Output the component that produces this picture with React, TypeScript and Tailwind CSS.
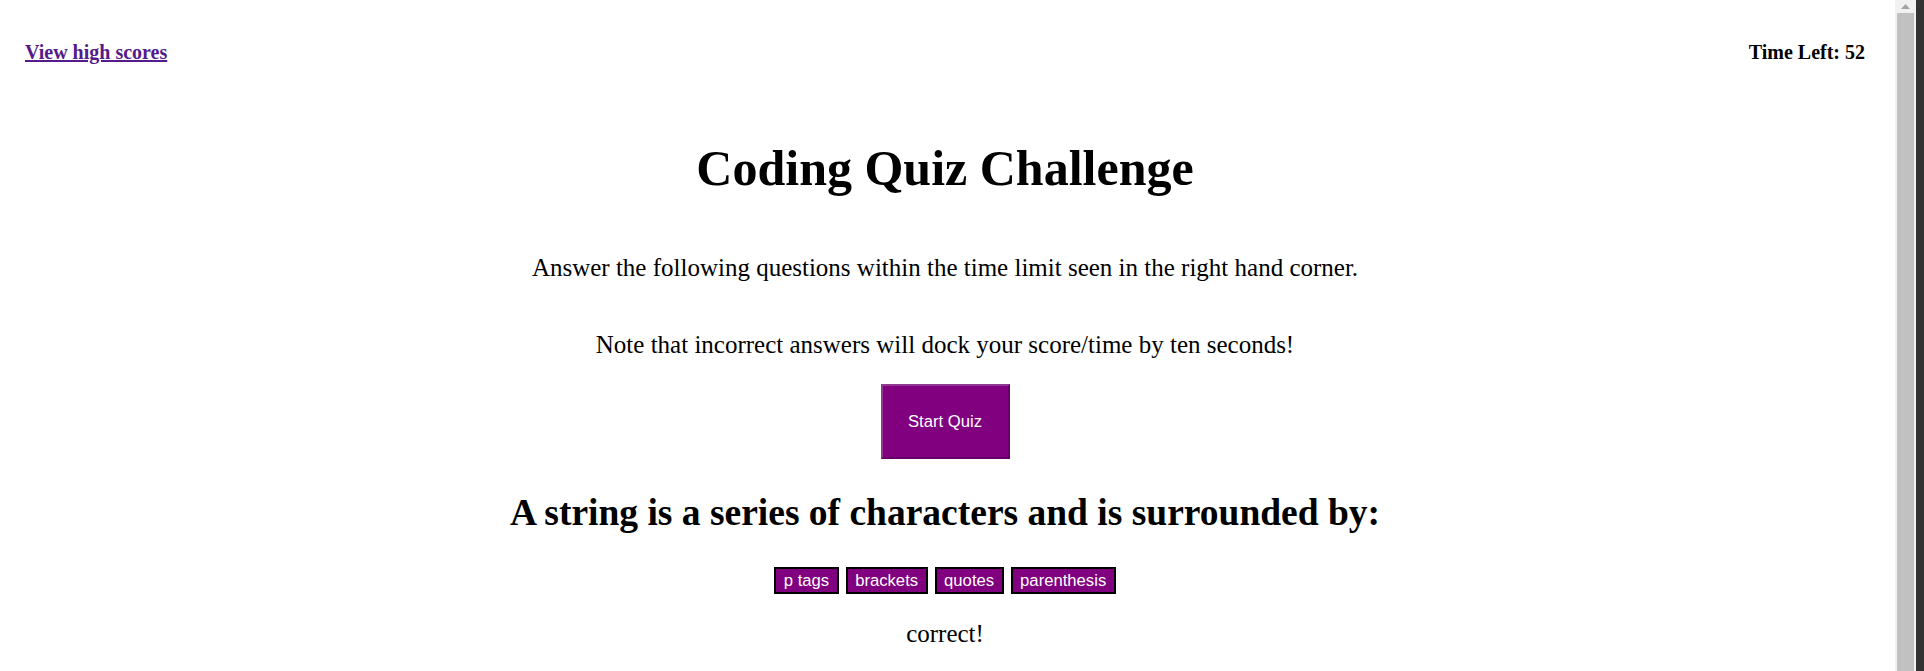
import React from 'react';

const answers = ['p tags', 'brackets', 'quotes', 'parenthesis'];

export default function App() {
  return (
    <div className="flex h-[671px] w-full overflow-hidden bg-white text-black">
      <div className="flex-1 min-w-0 font-['Liberation_Serif','Times_New_Roman',serif]">
        {/* header */}
        <div className="flex items-start justify-between pl-[25px] pr-[30px] pt-[41px] text-[20px] font-bold leading-[23px]">
          <a href="#" className="text-[#551a8b] underline">View high scores</a>
          <div>Time Left: 52</div>
        </div>

        <div className="flex flex-col items-center pr-[5px] text-center">
          <h1 className="mt-[75px] text-[50px] font-bold leading-[58px]">Coding Quiz Challenge</h1>
          <p className="mt-[56px] text-[25px] leading-[29px]">
            Answer the following questions within the time limit seen in the right hand corner.
          </p>
          <p className="mt-[48px] text-[25px] leading-[29px]">
            Note that incorrect answers will dock your score/time by ten seconds!
          </p>
          <button className="mt-[25px] flex h-[75px] w-[129px] items-center justify-center border-2 border-t-[#8f3a8f] border-l-[#8f3a8f] border-r-[#660066] border-b-[#660066] bg-[#800080] font-['Liberation_Sans',Arial,sans-serif] text-[16.67px] text-white">
            Start Quiz
          </button>
          <h2 className="mt-[32px] text-[37.5px] font-bold leading-[43px]">
            A string is a series of characters and is surrounded by:
          </h2>
          <div className="mt-[33px] flex gap-[7px]">
            {answers.map(a => (
              <button
                key={a}
                className="h-[27px] border-2 border-black bg-[#800080] px-[7.5px] font-['Liberation_Sans',Arial,sans-serif] text-[16.67px] leading-[19px] text-white"
              >
                {a}
              </button>
            ))}
          </div>
          <p className="mt-[25px] text-[25px] leading-[29px]">correct!</p>
        </div>
      </div>

      {/* scrollbar */}
      <div className="flex w-[21px] flex-col items-center bg-[#f1f1f1]">
        <div className="flex h-[13px] w-full items-center justify-center">
          <svg width="9" height="5" viewBox="0 0 9 5">
            <path d="M4.5 0 L9 5 L0 5 Z" fill="#a3a3a3" />
          </svg>
        </div>
        <div className="w-[17px] flex-1 bg-[#c1c1c1]" />
      </div>
      <div className="w-[8px] bg-[#333333]" />
    </div>
  );
}
